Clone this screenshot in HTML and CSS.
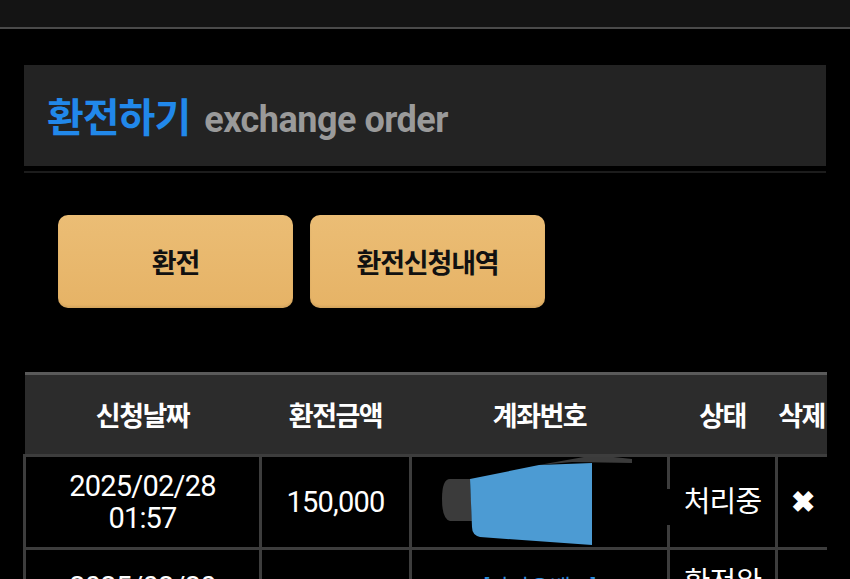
FILE: index.html
```html
<!DOCTYPE html>
<html lang="ko">
<head>
    <meta charset="UTF-8">
    <meta name="viewport" content="width=device-width, initial-scale=1.0">
    <title>환전하기</title>
    <link rel="stylesheet" href="styles.css">
</head>
<body>

<!-- top app bar -->
<div class="top-bar"></div>

<div class="page">
    <div class="title-box">
        <h1><span class="title-ko">환전하기</span><span class="title-en">exchange order</span></h1>
    </div>
    <div class="title-line"></div>

    <div class="btn-row">
        <button class="tab-btn">환전</button>
        <button class="tab-btn">환전신청내역</button>
    </div>

    <table class="order-table">
        <colgroup>
            <col style="width: 236px">
            <col style="width: 150px">
            <col style="width: 258px">
            <col style="width: 108px">
            <col style="width: 50px">
        </colgroup>
        <thead>
            <tr>
                <th>신청날짜</th>
                <th>환전금액</th>
                <th>계좌번호</th>
                <th>상태</th>
                <th>삭제</th>
            </tr>
        </thead>
        <tbody>
            <tr>
                <td>2025/02/28<br>01:57</td>
                <td>150,000</td>
                <td class="account">
                    <!-- redacted account number -->
                    <svg class="redact" width="258" height="93" viewBox="0 0 258 93">
                        <path d="M58 22 L38 22 Q30 22 30 42 Q30 62 38 64 L60 64 Z" fill="#3b3b3b"/>
                        <path d="M127 8 L183 -2 L220 2 L220 6 L160 5 Z" fill="#3b3b3b"/>
                        <path d="M58 22 L127 8 L180 6 L180 88 L68 80 Q60 78 60 70 Z" fill="#4c9bd3"/>
                        <rect x="252" y="32" width="8" height="36" fill="#000"/>
                    </svg>
                </td>
                <td>처리중</td>
                <td class="del">&#10006;</td>
            </tr>
            <tr class="row-done">
                <td>2025/02/20<br>01:40</td>
                <td>150,000</td>
                <td class="account"><span class="bank">[카카오뱅크]</span><br>&nbsp;</td>
                <td class="status">환전완<br>료</td>
                <td class="del"></td>
            </tr>
        </tbody>
    </table>
</div>

</body>
</html>
```

FILE: styles.css
```css
html, body {
    margin: 0;
    background-color: #000;
    font-family: Roboto, "Noto Sans CJK KR", sans-serif;
    color: #fff;
    overflow: hidden;
}
.top-bar {
    height: 27px;
    background-color: #141414;
    border-bottom: 2px solid #4a4a4a;
}
.page {
    padding: 36px 24px 0 24px;
}
.title-box {
    background-color: #232323;
    height: 101px;
    display: flex;
    align-items: center;
    padding: 6px 0 0 23px;
    box-sizing: border-box;
}
h1 {
    margin: 0;
    font-size: 40px;
    font-weight: 700;
    line-height: 1;
    letter-spacing: -1px;
}
.title-ko {
    color: #2188ea;
    margin-right: 14px;
}
.title-en {
    color: #9a9a9a;
    font-size: 36px;
    letter-spacing: -0.5px;
}
.title-line {
    height: 2px;
    background-color: #1c1c1c;
    margin-top: 5px;
}
.btn-row {
    display: flex;
    gap: 17px;
    padding: 42px 0 0 34px;
}
.tab-btn {
    width: 235px;
    height: 93px;
    border: none;
    border-radius: 10px;
    background: linear-gradient(#ebbd75, #e6b366);
    box-shadow: 0 2px 3px rgba(0, 0, 0, 0.6), inset 0 -2px 2px rgba(0, 0, 0, 0.08);
    color: #111;
    font-family: "Noto Sans CJK KR", sans-serif;
    font-size: 27px;
    font-weight: 700;
    letter-spacing: -1.2px;
    cursor: pointer;
}
.order-table {
    margin-top: 64px;
    margin-left: -1px;
    width: 803px;
    table-layout: fixed;
    border-collapse: collapse;
    border-top: 3px solid #5a5a5a;
}
.order-table th {
    background-color: #2c2c2c;
    height: 79px;
    padding: 0;
    font-family: "Noto Sans CJK KR", sans-serif;
    font-size: 27px;
    font-weight: 700;
    letter-spacing: -1.5px;
    white-space: nowrap;
    border-bottom: 3px solid #3d3d3d;
}
.order-table td {
    border: 3px solid #3d3d3d;
    height: 90px;
    padding: 0;
    text-align: center;
    font-size: 29px;
    line-height: 32px;
    letter-spacing: -0.8px;
}
.order-table td:last-child {
    border-right: none;
}
.order-table .row-done td {
    padding-top: 8px;
}
.order-table .row-done .status {
    padding-top: 0;
}
.account {
    position: relative;
}
.redact {
    position: absolute;
    left: 0;
    top: 0;
}
.bank {
    color: #2b8fe0;
    font-size: 23px;
}
.del {
    font-size: 26px;
    font-weight: 700;
}
```
